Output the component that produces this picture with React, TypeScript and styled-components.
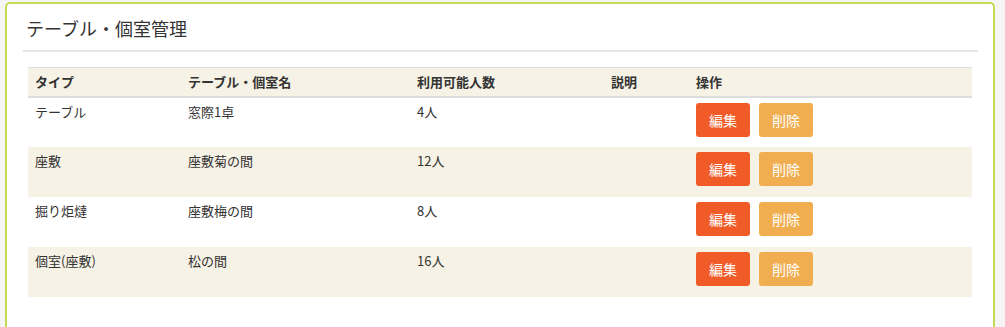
import styled, { createGlobalStyle } from 'styled-components'

const GlobalStyle = createGlobalStyle`
  html, body {
    margin: 0;
    padding: 0;
    background: #f5f5f5;
  }
  body {
    font-family: "Noto Sans CJK JP", "Liberation Sans", sans-serif;
    font-size: 13px;
    color: #333;
  }
`

const Page = styled.div`
  width: 1005px;
  height: 327px;
  padding: 2px 10px 0 5px;
  box-sizing: border-box;
  overflow: hidden;
`

const Panel = styled.section`
  background: #fff;
  border: 2px solid #c5dc58;
  border-bottom: none;
  border-radius: 5px 5px 0 0;
  height: 340px;
  padding: 0 15px 0 16px;
  box-sizing: border-box;
`

const Heading = styled.h2`
  margin: 0;
  padding: 12px 0 10px 3px;
  font-size: 18px;
  font-weight: 400;
  line-height: 24px;
  color: #333;
  border-bottom: 2px solid #e2e6ea;
`

const TableWrap = styled.div`
  padding: 15px 6px 0 5px;
`

const Table = styled.table`
  width: 100%;
  border-collapse: collapse;
  table-layout: fixed;
`

const HeadCell = styled.th<{ $w?: number }>`
  box-sizing: border-box;
  width: ${p => (p.$w ? `${p.$w}px` : 'auto')};
  height: 29px;
  padding: 0 7px;
  text-align: left;
  font-weight: 700;
  font-size: 13px;
  color: #333;
  background: #f6f2e5;
  border-top: 1px solid #ddd;
  border-bottom: 2px solid #ddd;
`

const Row = styled.tr<{ $alt?: boolean }>`
  background: ${p => (p.$alt ? '#f6f2e5' : '#fff')};
  & + & td {
    border-top: 1px solid #ddd;
  }
`

const Cell = styled.td`
  box-sizing: border-box;
  height: 50px;
  padding: 4px 7px 0;
  vertical-align: top;
  line-height: 20px;
  font-size: 13px;
  color: #333;
`

const Actions = styled.div`
  display: flex;
  gap: 9px;
  padding-top: 1px;
`

const Button = styled.button<{ $kind: 'edit' | 'delete' }>`
  width: 54px;
  height: 34px;
  border: none;
  border-radius: 3px;
  font-family: inherit;
  font-size: 14px;
  color: #fff;
  background: ${p => (p.$kind === 'edit' ? '#f15b28' : '#f0ae50')};
  cursor: pointer;
  padding: 0;
`

const rows = [
  { type: 'テーブル', name: '窓際1卓', cap: '4人' },
  { type: '座敷', name: '座敷菊の間', cap: '12人' },
  { type: '掘り炬燵', name: '座敷梅の間', cap: '8人' },
  { type: '個室(座敷)', name: '松の間', cap: '16人' },
]

const App = () => {
  return (
    <Page>
      <GlobalStyle />
      <Panel>
        <Heading>テーブル・個室管理</Heading>
        <TableWrap>
          <Table>
            <thead>
              <tr>
                <HeadCell $w={153}>タイプ</HeadCell>
                <HeadCell $w={229}>テーブル・個室名</HeadCell>
                <HeadCell $w={194}>利用可能人数</HeadCell>
                <HeadCell $w={85}>説明</HeadCell>
                <HeadCell>操作</HeadCell>
              </tr>
            </thead>
            <tbody>
              {rows.map((r, i) => (
                <Row key={r.name} $alt={i % 2 === 1}>
                  <Cell>{r.type}</Cell>
                  <Cell>{r.name}</Cell>
                  <Cell>{r.cap}</Cell>
                  <Cell></Cell>
                  <Cell>
                    <Actions>
                      <Button $kind="edit">編集</Button>
                      <Button $kind="delete">削除</Button>
                    </Actions>
                  </Cell>
                </Row>
              ))}
            </tbody>
          </Table>
        </TableWrap>
      </Panel>
    </Page>
  )
}

export default App
